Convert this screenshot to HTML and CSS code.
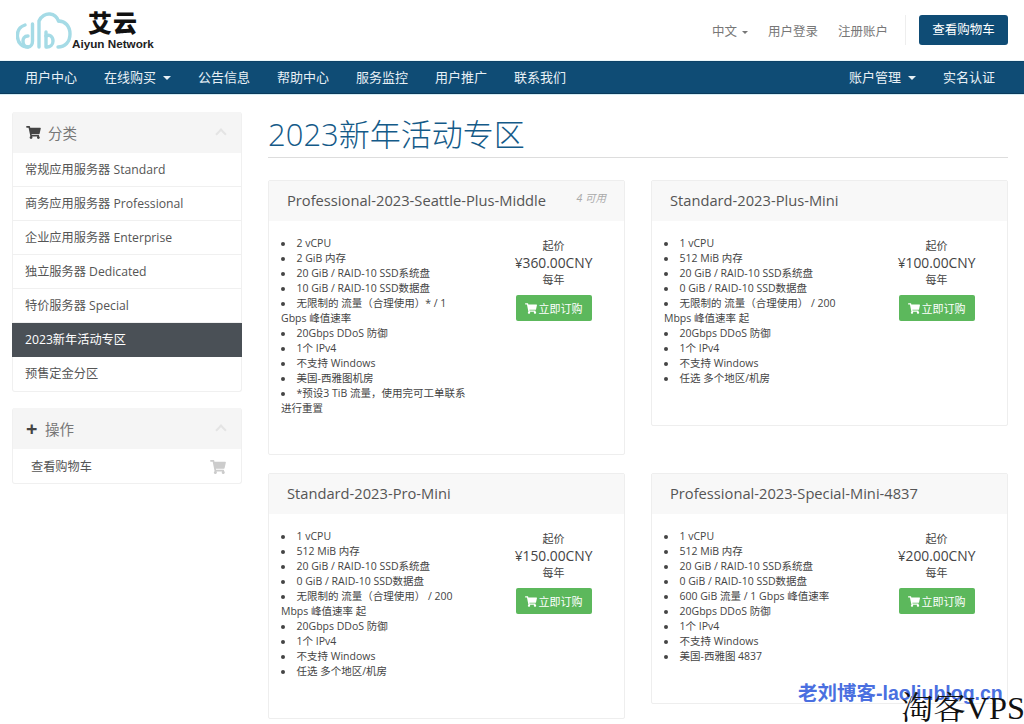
FILE: index.html
```html
<!DOCTYPE html>
<html lang="zh-CN">
<head>
    <meta charset="UTF-8">
    <meta name="viewport" content="width=device-width, initial-scale=1.0">
    <title>2023新年活动专区 - 艾云</title>
    <link rel="stylesheet" href="styles.css">
</head>
<body>
    <svg class="icon-defs" width="0" height="0">
        <symbol id="cart" viewBox="0 0 576 512">
            <path d="M528.12 301.319l47.273-208C578.806 78.301 567.391 64 551.99 64H159.208l-9.166-44.81C147.758 8.021 137.93 0 126.529 0H24C10.745 0 0 10.745 0 24v16c0 13.255 10.745 24 24 24h69.883l70.248 343.435C147.325 417.1 136 435.222 136 456c0 30.928 25.072 56 56 56s56-25.072 56-56c0-15.674-6.447-29.835-16.824-40h209.647C430.447 426.165 424 440.326 424 456c0 30.928 25.072 56 56 56s56-25.072 56-56c0-22.172-12.888-41.332-31.579-50.405l5.517-24.276c3.413-15.018-8.002-29.319-23.403-29.319H218.117l-6.545-32h293.145c11.206 0 20.92-7.754 23.403-18.681z"/>
        </symbol>
    </svg>

    <header class="top-bar">
        <a class="logo" href="#">
            <svg class="logo-mark" viewBox="0 0 56 38" width="56" height="38" fill="none" stroke="#a5dbe6" stroke-width="3.4" stroke-linecap="round">
                <path d="M9 13 C3 15 1 20 1.5 25 C2 31 6 35 12 35"/>
                <path d="M12 24 C8 24 7 27 7 29 C7 32 9 35 12 35 C15 35 16.500 32 16.500 29 V12"/>
                <path d="M23 35 V9 C25 4 30 1.500 34 2 C38 2.500 41 5 42.500 9"/>
                <path d="M30 35 V20"/>
                <path d="M30 24 C33 22 37 24 37 29 C37 33 34 35 31 35"/>
                <path d="M42.500 9 C49 9 54 14 54 22 C54 30 49 35 42 35"/>
            </svg>
            <span class="logo-text">
                <span class="logo-cn">艾云</span>
                <span class="logo-en">Aiyun Network</span>
            </span>
        </a>
        <nav class="top-links">
            <a href="#">中文<i class="caret"></i></a>
            <a href="#">用户登录</a>
            <a href="#">注册账户</a>
            <span class="top-divider"></span>
            <a class="cart-btn" href="#">查看购物车</a>
        </nav>
    </header>

    <nav class="main-nav">
        <div class="nav-group">
            <a href="#">用户中心</a>
            <a href="#">在线购买<i class="caret"></i></a>
            <a href="#">公告信息</a>
            <a href="#">帮助中心</a>
            <a href="#">服务监控</a>
            <a href="#">用户推广</a>
            <a href="#">联系我们</a>
        </div>
        <div class="nav-group">
            <a href="#">账户管理<i class="caret"></i></a>
            <a href="#">实名认证</a>
        </div>
    </nav>

    <div class="page">
        <aside class="sidebar">
            <section class="panel">
                <div class="panel-head">
                    <svg class="panel-icon"><use href="#cart"/></svg>
                    <span>分类</span>
                    <i class="chevron"></i>
                </div>
                <a class="side-item" href="#">常规应用服务器 Standard</a>
                <a class="side-item" href="#">商务应用服务器 Professional</a>
                <a class="side-item" href="#">企业应用服务器 Enterprise</a>
                <a class="side-item" href="#">独立服务器 Dedicated</a>
                <a class="side-item" href="#">特价服务器 Special</a>
                <a class="side-item active" href="#">2023新年活动专区</a>
                <a class="side-item" href="#">预售定金分区</a>
            </section>
            <section class="panel">
                <div class="panel-head">
                    <b class="plus">+</b>
                    <span>操作</span>
                    <i class="chevron"></i>
                </div>
                <a class="side-item side-action" href="#">
                    查看购物车
                    <svg class="side-cart"><use href="#cart"/></svg>
                </a>
            </section>
        </aside>

        <main class="content">
            <h1>2023新年活动专区</h1>
            <div class="products">
                <article class="product">
                    <div class="product-head">
                        <span>Professional-2023-Seattle-Plus-Middle</span>
                        <em class="stock">4 可用</em>
                    </div>
                    <div class="product-body">
                        <ul class="specs">
                            <li>2 vCPU</li>
                            <li>2 GiB 内存</li>
                            <li>20 GiB / RAID-10 SSD系统盘</li>
                            <li>10 GiB / RAID-10 SSD数据盘</li>
                            <li>无限制的 流量（合理使用）* / 1 Gbps 峰值速率</li>
                            <li>20Gbps DDoS 防御</li>
                            <li>1个 IPv4</li>
                            <li>不支持 Windows</li>
                            <li>美国-西雅图机房</li>
                            <li>*预设3 TiB 流量，使用完可工单联系进行重置</li>
                        </ul>
                        <div class="pricing">
                            <div>起价</div>
                            <div class="price">¥360.00CNY</div>
                            <div>每年</div>
                            <a class="order-btn" href="#"><svg><use href="#cart"/></svg>立即订购</a>
                        </div>
                    </div>
                </article>

                <article class="product">
                    <div class="product-head">
                        <span>Standard-2023-Plus-Mini</span>
                    </div>
                    <div class="product-body">
                        <ul class="specs">
                            <li>1 vCPU</li>
                            <li>512 MiB 内存</li>
                            <li>20 GiB / RAID-10 SSD系统盘</li>
                            <li>0 GiB / RAID-10 SSD数据盘</li>
                            <li>无限制的 流量（合理使用） / 200 Mbps 峰值速率 起</li>
                            <li>20Gbps DDoS 防御</li>
                            <li>1个 IPv4</li>
                            <li>不支持 Windows</li>
                            <li>任选 多个地区/机房</li>
                        </ul>
                        <div class="pricing">
                            <div>起价</div>
                            <div class="price">¥100.00CNY</div>
                            <div>每年</div>
                            <a class="order-btn" href="#"><svg><use href="#cart"/></svg>立即订购</a>
                        </div>
                    </div>
                </article>

                <article class="product">
                    <div class="product-head">
                        <span>Standard-2023-Pro-Mini</span>
                    </div>
                    <div class="product-body">
                        <ul class="specs">
                            <li>1 vCPU</li>
                            <li>512 MiB 内存</li>
                            <li>20 GiB / RAID-10 SSD系统盘</li>
                            <li>0 GiB / RAID-10 SSD数据盘</li>
                            <li>无限制的 流量（合理使用） / 200 Mbps 峰值速率 起</li>
                            <li>20Gbps DDoS 防御</li>
                            <li>1个 IPv4</li>
                            <li>不支持 Windows</li>
                            <li>任选 多个地区/机房</li>
                        </ul>
                        <div class="pricing">
                            <div>起价</div>
                            <div class="price">¥150.00CNY</div>
                            <div>每年</div>
                            <a class="order-btn" href="#"><svg><use href="#cart"/></svg>立即订购</a>
                        </div>
                    </div>
                </article>

                <article class="product">
                    <div class="product-head">
                        <span>Professional-2023-Special-Mini-4837</span>
                    </div>
                    <div class="product-body">
                        <ul class="specs">
                            <li>1 vCPU</li>
                            <li>512 MiB 内存</li>
                            <li>20 GiB / RAID-10 SSD系统盘</li>
                            <li>0 GiB / RAID-10 SSD数据盘</li>
                            <li>600 GiB 流量 / 1 Gbps 峰值速率</li>
                            <li>20Gbps DDoS 防御</li>
                            <li>1个 IPv4</li>
                            <li>不支持 Windows</li>
                            <li>美国-西雅图 4837</li>
                        </ul>
                        <div class="pricing">
                            <div>起价</div>
                            <div class="price">¥200.00CNY</div>
                            <div>每年</div>
                            <a class="order-btn" href="#"><svg><use href="#cart"/></svg>立即订购</a>
                        </div>
                    </div>
                </article>
            </div>
        </main>
    </div>

    <div class="mark-blog">老刘博客-laoliublog.cn</div>
    <div class="mark-vps">淘客VPS</div>
</body>
</html>
```

FILE: styles.css
```css
* {
    margin: 0;
    padding: 0;
    box-sizing: border-box;
}

html, body {
    height: 724px;
    overflow: hidden;
}

body {
    position: relative;
    font-family: "Open Sans", "Noto Sans CJK SC", sans-serif;
    font-size: 12px;
    color: #333;
    background: #fff;
}

a {
    color: inherit;
    text-decoration: none;
}

.icon-defs {
    position: absolute;
}

.caret {
    display: inline-block;
    margin-left: 6px;
    vertical-align: 2px;
    border-top: 4px solid currentColor;
    border-left: 4px solid transparent;
    border-right: 4px solid transparent;
}

/* top bar */
.top-bar {
    height: 61px;
    padding: 12px 16px 0 16px;
    display: flex;
    justify-content: space-between;
    align-items: flex-start;
}

.logo {
    display: flex;
    color: #1a1a1a;
}

.logo-text {
    display: flex;
    flex-direction: column;
}

.logo-cn {
    margin-left: 16px;
    font-size: 24px;
    line-height: 22px;
    font-weight: 900;
    letter-spacing: 1px;
    color: #111;
}

.logo-en {
    font-family: "Liberation Sans", sans-serif;
    font-size: 11.700px;
    line-height: 13px;
    margin-top: 3px;
    font-weight: bold;
    color: #222;
}

.top-links {
    display: flex;
    align-items: center;
    height: 30px;
    margin-top: 3px;
    font-size: 12.500px;
    color: #777;
}

.top-links a {
    margin-right: 20px;
}

.top-links .caret {
    border-top-width: 3px;
    border-left-width: 3px;
    border-right-width: 3px;
    margin-left: 5px;
}

.top-divider {
    width: 1px;
    height: 30px;
    background: #eee;
    margin: 0 13px 0 -3px;
}

.top-links .cart-btn {
    margin: 0;
    width: 89px;
    height: 30px;
    line-height: 29px;
    text-align: center;
    border-radius: 3px;
    background: #0f4c75;
    color: #fff;
}

/* main nav */
.main-nav {
    height: 33px;
    padding: 0 29px 2px 25px;
    display: flex;
    justify-content: space-between;
    align-items: center;
    background: #0f4c75;
    border-top: 1px solid #0c4268;
    border-bottom: 1px solid #0a3a5c;
    box-shadow: 0 1px 0 #d5edf5, 0 -1px 0 #eaf7fb;
    color: #e8f0f5;
    font-size: 13px;
}

.nav-group {
    display: flex;
    gap: 27px;
}

.nav-group .caret {
    margin-left: 7px;
}

/* page layout */
.page {
    padding: 18px 16px 0 12px;
    display: flex;
    gap: 26px;
}

.sidebar {
    width: 230px;
    flex-shrink: 0;
}

.panel {
    margin-bottom: 16px;
    border: 1px solid #f0f0f0;
    border-top: 0;
    border-radius: 3px;
}

.panel-head {
    height: 41px;
    padding: 0 13px;
    display: flex;
    align-items: center;
    background: #f5f5f5;
    color: #777;
    font-size: 14.500px;
}

.panel-icon {
    width: 15px;
    height: 13px;
    margin-right: 7px;
    fill: #444;
}

.plus {
    width: 12px;
    margin-right: 7px;
    font-size: 20px;
    line-height: 20px;
    color: #444;
}

.chevron {
    width: 8px;
    height: 8px;
    margin-left: auto;
    margin-right: 3px;
    margin-top: 2px;
    border-top: 2px solid #e4e4e4;
    border-left: 2px solid #e4e4e4;
    transform: rotate(45deg);
}

.side-item {
    display: block;
    height: 34px;
    line-height: 32px;
    padding: 1px 12px 0 12px;
    border-bottom: 1px solid #f0f0f0;
    color: #555;
    font-size: 12.200px;
}

.side-item:last-child {
    border-bottom: 0;
}

.side-item.active {
    margin: 0 -1px;
    padding: 1px 13px 0 13px;
    background: #4a5056;
    border-bottom: 0;
    color: #fff;
}

.side-action {
    display: flex;
    justify-content: space-between;
    align-items: center;
    padding: 1px 15px 0 18px;
}

.side-cart {
    width: 16px;
    height: 14px;
    fill: #ccc;
}

/* products */
.content {
    flex: 1;
}

h1 {
    height: 46px;
    border-bottom: 1px solid #ddd;
    font-size: 31px;
    line-height: 44px;
    font-weight: 300;
    color: #145a88;
}

.products {
    margin-top: 22px;
    display: grid;
    grid-template-columns: 357px 357px;
    column-gap: 26px;
    row-gap: 18px;
    align-items: start;
}

.product {
    border: 1px solid #eee;
    border-radius: 2px;
}

.product:first-child {
    height: 275px;
}

.product-head {
    height: 40px;
    padding: 0 18px 2px 18px;
    display: flex;
    justify-content: space-between;
    align-items: center;
    background: #f8f8f8;
    color: #555;
    font-size: 14.700px;
}

.stock {
    align-self: flex-start;
    margin-top: 9px;
    font-size: 10.500px;
    color: #aaa;
}

.product-body {
    padding: 15px 12px 39px 12px;
    display: flex;
}

.specs {
    width: 190px;
    list-style-position: inside;
    font-size: 10.500px;
    line-height: 15px;
    color: #444;
}

.pricing {
    flex: 1;
    margin-top: 1px;
    padding-left: 24px;
    display: flex;
    flex-direction: column;
    align-items: center;
    font-size: 11px;
    line-height: 17px;
    color: #444;
}

.pricing .price {
    font-size: 13.800px;
    line-height: 17px;
}

.order-btn {
    margin-top: 7px;
    width: 76px;
    height: 26px;
    display: flex;
    align-items: center;
    justify-content: center;
    gap: 2px;
    border-radius: 2px;
    background: #5cb85c;
    color: #fff;
    font-size: 11px;
}

.order-btn svg {
    width: 12px;
    height: 11px;
    fill: #fff;
}

/* watermarks over the page */
.mark-blog {
    position: absolute;
    left: 798px;
    top: 677px;
    font-family: "Liberation Sans", "Noto Sans CJK SC", sans-serif;
    font-size: 19.500px;
    font-weight: bold;
    color: #4a6fe0;
    white-space: nowrap;
}

.mark-vps {
    position: absolute;
    left: 901px;
    top: 688px;
    font-family: "Liberation Serif", "Noto Serif CJK SC", "Noto Sans CJK SC", serif;
    font-size: 32.300px;
    line-height: 40px;
    color: #111;
    white-space: nowrap;
}
```
